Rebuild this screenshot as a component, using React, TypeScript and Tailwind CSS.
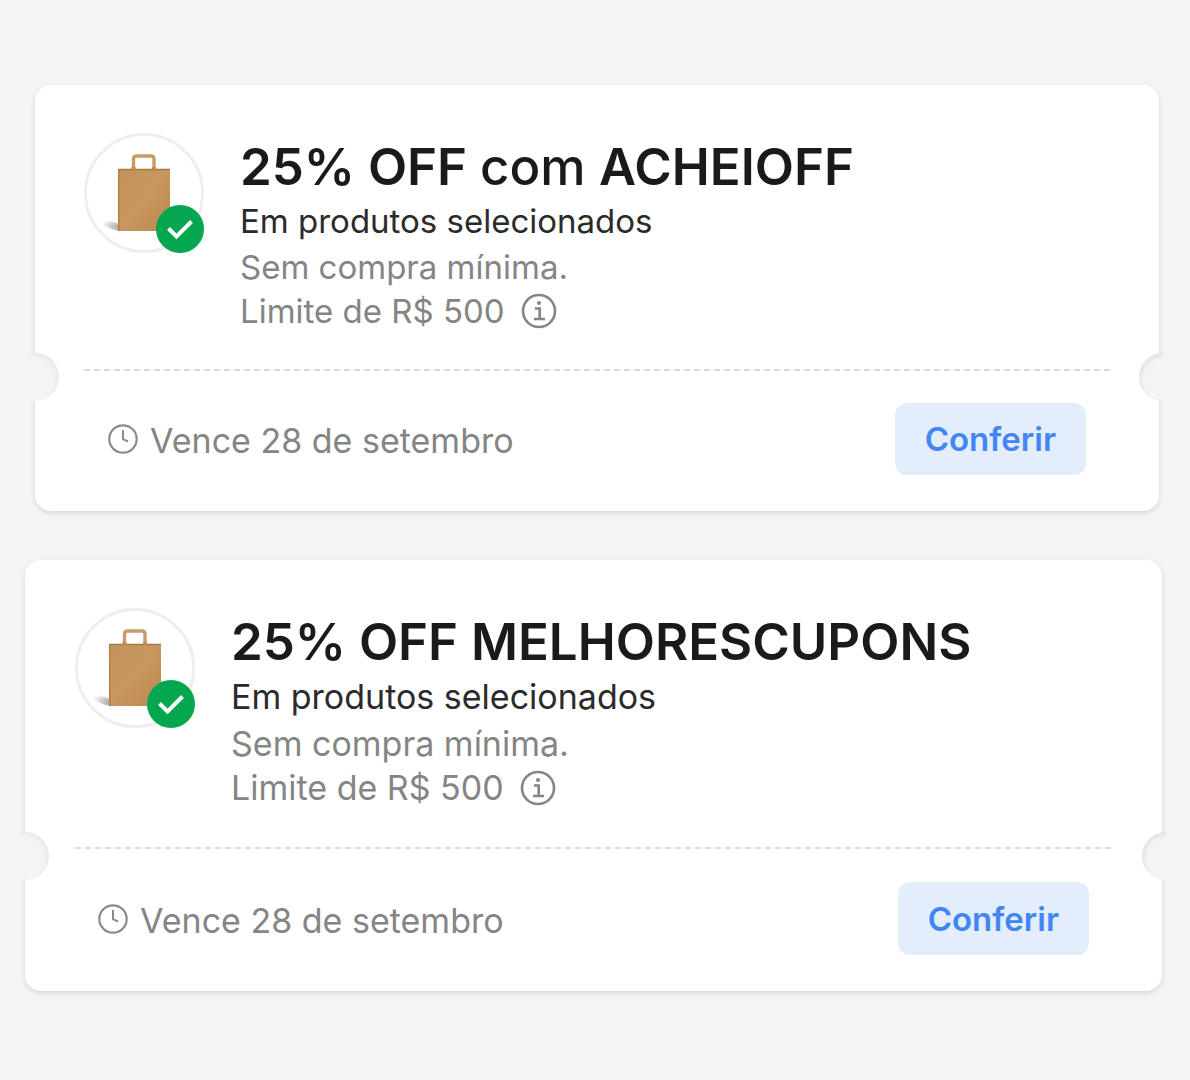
interface couponType {
  discount: string;
  joiner?: string;
  code: string;
  subtitle: string;
  minimum: string;
  limit: string;
  expires: string;
}

interface cardProps {
  coupon: couponType;
  large?: boolean;
}

const coupons: couponType[] = [
  {
    discount: "25% OFF",
    joiner: "com",
    code: "ACHEIOFF",
    subtitle: "Em produtos selecionados",
    minimum: "Sem compra mínima.",
    limit: "Limite de R$ 500",
    expires: "Vence 28 de setembro",
  },
  {
    discount: "25% OFF",
    code: "MELHORESCUPONS",
    subtitle: "Em produtos selecionados",
    minimum: "Sem compra mínima.",
    limit: "Limite de R$ 500",
    expires: "Vence 28 de setembro",
  },
];

const BagIcon = () => (
  <svg viewBox="0 0 120 120" className="size-full" aria-hidden="true">
    <defs>
      <linearGradient id="paper" x1="0" y1="0" x2="1" y2="1">
        <stop offset="0" stopColor="#c4935c" />
        <stop offset="0.5" stopColor="#c8965f" />
        <stop offset="1" stopColor="#bd8850" />
      </linearGradient>
      <radialGradient id="shade" cx="1" cy="0.6" r="1">
        <stop offset="0" stopColor="#8a8178" stopOpacity="0.7" />
        <stop offset="1" stopColor="#8a8178" stopOpacity="0" />
      </radialGradient>
    </defs>
    <circle cx="60" cy="60" r="58.5" fill="#fff" stroke="#eeeeee" strokeWidth="3" />
    <path d="M16 89 Q27 86 35 91 V98 Q25 97 16 89Z" fill="url(#shade)" />
    <path
      d="M49.5 37 V26 Q49.5 23 52.5 23 H67 Q70 23 70 26 V37"
      fill="none"
      stroke="#c99b69"
      strokeWidth="3.4"
    />
    <path d="M34 36 H86 V98 H34Z" fill="url(#paper)" />
    <path d="M34 36.5 H86" stroke="#a87743" strokeWidth="1.5" />
    <path d="M34.7 36 V98" stroke="#b17f49" strokeWidth="1.5" />
    <path d="M49.5 38 V34 M70 38 V34" stroke="#bd8b56" strokeWidth="4" />
  </svg>
);

const CheckBadge = () => (
  <svg viewBox="0 0 48 48" className="absolute right-0 bottom-0 size-12" aria-hidden="true">
    <circle cx="24" cy="24" r="24" fill="#04a650" />
    <path d="M12.5 23.5 L20.5 31.5 L35.5 16.5" fill="none" stroke="#fff" strokeWidth="4" />
  </svg>
);

const InfoIcon = () => (
  <svg viewBox="0 0 36 36" className="size-9" fill="none" stroke="#858585" aria-hidden="true">
    <circle cx="18" cy="18" r="16" strokeWidth="2.6" />
    <circle cx="18" cy="10" r="2" fill="#858585" stroke="none" />
    <path d="M14 15.5 H18.7 V26 M13 26 H24" strokeWidth="2.6" />
  </svg>
);

const ClockIcon = () => (
  <svg viewBox="0 0 30 30" className="size-[30px]" fill="none" stroke="#8a8a8a" aria-hidden="true">
    <circle cx="15" cy="15" r="13.7" strokeWidth="2.2" />
    <path d="M15 6 V15.2 L20 17.5" strokeWidth="2" />
  </svg>
);

const CouponCard = ({ coupon, large }: cardProps) => {
  return (
    <article
      className={`relative rounded-2xl bg-white pt-12 pb-9 shadow-[0_2px_5px_rgba(0,0,0,0.12)] ${
        large ? "ml-[25px] mr-7 text-[34px]" : "ml-[35px] mr-[31px] text-[33px]"
      }`}
    >
      <div className={`flex gap-9 ${large ? "mx-[50px]" : "mx-[49px]"}`}>
        <div className="relative size-[120px] shrink-0">
          <BagIcon />
          <CheckBadge />
        </div>
        <div className="min-w-0">
          <h2 className="text-[51px] leading-[68px] font-semibold text-[#1a1a1a]">
            {coupon.discount} {coupon.joiner && <span className="font-medium">{coupon.joiner} </span>}
            {coupon.code}
          </h2>
          <p className={`text-[#2b2b2b] ${large ? "leading-[42px]" : "leading-[40px]"}`}>
            {coupon.subtitle}
          </p>
          <p className="pt-1 leading-[44px] text-[#858585]">{coupon.minimum}</p>
          <div className="flex items-center gap-4 leading-[44px] text-[#858585]">
            <p>{coupon.limit}</p>
            <button type="button" aria-label="Mais informações">
              <InfoIcon />
            </button>
          </div>
        </div>
      </div>

      {/* tear line */}
      <div
        className={`h-0.5 bg-[repeating-linear-gradient(90deg,#dcdcdc_0_6px,transparent_6px_10px)] ${
          large ? "mx-[50px] mt-[37px]" : "mx-[49px] mt-9"
        }`}
      />
      <span
        className={`absolute -left-1 h-12 w-7 rounded-r-full bg-[#f4f4f4] shadow-[inset_-3px_3px_3px_#ebebeb] ${
          large ? "top-[272px]" : "top-[268px]"
        }`}
      />
      <span
        className={`absolute -right-1 h-12 w-6 rounded-l-full bg-[#f4f4f4] shadow-[inset_3px_3px_3px_#e6e6e6] ${
          large ? "top-[272px]" : "top-[268px]"
        }`}
      />

      <div className={`mx-[73px] flex items-center justify-between ${large ? "pt-[33px]" : "pt-8"}`}>
        <div className="flex items-center gap-3">
          <ClockIcon />
          <p className="pt-1 text-[34px] leading-[44px] text-[#858585]">{coupon.expires}</p>
        </div>
        <button
          type="button"
          className={`rounded-xl bg-[#e3edfb] px-[30px] text-[33px] leading-[44px] font-semibold text-[#4285f4] ${
            large ? "h-[73px]" : "h-[72px]"
          }`}
        >
          Conferir
        </button>
      </div>
    </article>
  );
};

const App = () => {
  return (
    <main className="flex min-h-screen flex-col gap-[49px] bg-[#f4f4f4] pt-[85px] pb-12 font-['Inter',sans-serif]">
      {coupons.map((item, index) => (
        <CouponCard key={item.code} coupon={item} large={index === 1} />
      ))}
    </main>
  );
};

export default App;
